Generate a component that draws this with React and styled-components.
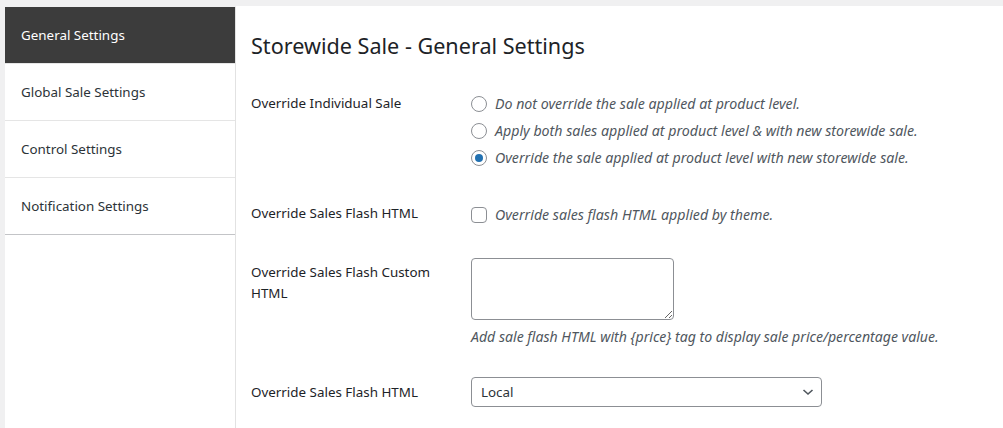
import React, { useState } from "react";
import styled, { createGlobalStyle } from "styled-components";

const GlobalStyle = createGlobalStyle`
  html, body {
    margin: 0;
    padding: 0;
    background: #f0f0f1;
    font-family: "Noto Sans", "Open Sans", sans-serif;
    color: #3c434a;
  }
`;

const Page = styled.div`
  display: flex;
  align-items: flex-start;
  padding: 6px 0 0 5px;
  min-height: 428px;
  box-sizing: border-box;
`;

const Sidebar = styled.ul`
  list-style: none;
  margin: 1px 0 0;
  padding: 0;
  width: 230px;
  align-self: stretch;
  background: #fff;
  border-right: 1px solid #e2e2e2;
`;

const Tab = styled.li`
  height: 56px;
  display: flex;
  align-items: center;
  padding-left: 16px;
  font-size: 13.4px;
  border-bottom: 1px solid ${({ $last }) => ($last ? "#c3c4c7" : "#e5e5e5")};
  background: ${({ $active }) => ($active ? "#3c3c3c" : "#fff")};
  color: ${({ $active }) => ($active ? "#fff" : "#2c3338")};
  cursor: pointer;
`;

const Main = styled.main`
  flex: 1;
  align-self: stretch;
  background: #fff;
  padding: 27px 15px 0 15px;
`;

const Title = styled.h2`
  margin: 0 0 31px;
  font-size: 21.6px;
  line-height: 26px;
  font-weight: 400;
  color: #1d2327;
`;

const Form = styled.div`
  display: flex;
  flex-direction: column;
  gap: 30px;
`;

const Row = styled.div`
  display: flex;
  align-items: flex-start;
`;

const Label = styled.div`
  width: 220px;
  flex: none;
  padding-top: ${({ $top }) => $top}px;
  padding-right: 20px;
  box-sizing: border-box;
  font-size: 13.4px;
  line-height: 21px;
  color: #1d2327;
`;

const Field = styled.div`
  display: flex;
  flex-direction: column;
`;

const Choice = styled.label`
  display: flex;
  align-items: center;
  gap: 8px;
  height: 27px;
  font-size: 14.2px;
  font-style: italic;
  color: #50575e;
`;

const Radio = styled.input.attrs({ type: "radio" })`
  appearance: none;
  margin: 0;
  width: 16px;
  height: 16px;
  border: 1px solid #8c8f94;
  border-radius: 50%;
  background: #fff;
  display: grid;
  place-items: center;
  box-sizing: border-box;

  &:checked::before {
    content: "";
    width: 8px;
    height: 8px;
    border-radius: 50%;
    background: #2271b1;
  }
`;

const Checkbox = styled.input.attrs({ type: "checkbox" })`
  appearance: none;
  margin: 0;
  width: 16px;
  height: 16px;
  border: 1px solid #8c8f94;
  border-radius: 4px;
  background: #fff;
  box-sizing: border-box;
`;

const TextArea = styled.textarea`
  width: 203px;
  height: 62px;
  box-sizing: border-box;
  border: 1px solid #8c8f94;
  border-radius: 4px;
  font-family: inherit;
  margin: 0;
`;

const Note = styled.p`
  margin: 7px 0 0;
  font-size: 14.1px;
  line-height: 20px;
  font-style: italic;
  color: #50575e;
`;

const SelectWrap = styled.div`
  position: relative;
  width: 351px;
`;

const Select = styled.select`
  appearance: none;
  width: 100%;
  height: 30px;
  box-sizing: border-box;
  border: 1px solid #8c8f94;
  border-radius: 4px;
  background: #fff;
  padding: 0 30px 0 9px;
  font-family: inherit;
  font-size: 13.4px;
  color: #2c3338;
`;

const Chevron = styled.svg`
  position: absolute;
  right: 8px;
  top: 10px;
  pointer-events: none;
`;

const tabs = [
  "General Settings",
  "Global Sale Settings",
  "Control Settings",
  "Notification Settings",
];

const saleOptions = [
  "Do not override the sale applied at product level.",
  "Apply both sales applied at product level & with new storewide sale.",
  "Override the sale applied at product level with new storewide sale.",
];

export default function App() {
  const [active, setActive] = useState(0);
  const [sale, setSale] = useState(2);

  return (
    <>
      <GlobalStyle />
      <Page>
        <Sidebar>
          {tabs.map((t, i) => (
            <Tab
              key={t}
              $active={i === active}
              $last={i === tabs.length - 1}
              onClick={() => setActive(i)}
            >
              {t}
            </Tab>
          ))}
        </Sidebar>
        <Main>
          <Title>Storewide Sale - General Settings</Title>
          <Form>
            <Row>
              <Label $top={3}>Override Individual Sale</Label>
              <Field>
                {saleOptions.map((o, i) => (
                  <Choice key={o}>
                    <Radio
                      name="sale"
                      checked={sale === i}
                      onChange={() => setSale(i)}
                    />
                    {o}
                  </Choice>
                ))}
              </Field>
            </Row>
            <Row>
              <Label $top={2}>Override Sales Flash HTML</Label>
              <Field>
                <Choice>
                  <Checkbox />
                  Override sales flash HTML applied by theme.
                </Choice>
              </Field>
            </Row>
            <Row>
              <Label $top={4}>Override Sales Flash Custom HTML</Label>
              <Field>
                <TextArea />
                <Note>
                  Add sale flash HTML with {"{price}"} tag to display sale
                  price/percentage value.
                </Note>
              </Field>
            </Row>
            <Row>
              <Label $top={5}>Override Sales Flash HTML</Label>
              <Field>
                <SelectWrap>
                  <Select defaultValue="local">
                    <option value="local">Local</option>
                    <option value="global">Global</option>
                  </Select>
                  <Chevron width="12" height="10" viewBox="0 0 12 10">
                    <path
                      d="M1.5 3 L6 7 L10.5 3"
                      fill="none"
                      stroke="#50575e"
                      strokeWidth="1.6"
                    />
                  </Chevron>
                </SelectWrap>
              </Field>
            </Row>
          </Form>
        </Main>
      </Page>
    </>
  );
}
